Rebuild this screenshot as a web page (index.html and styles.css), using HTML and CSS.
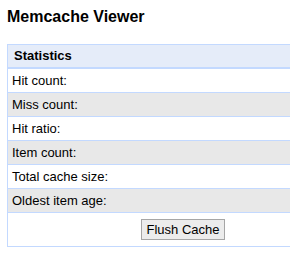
FILE: index.html
```html
<!DOCTYPE html>
<html>

<head>
    <meta charset="UTF-8">
    <meta name="viewport" content="width=device-width, initial-scale=1.0">
    <title>Memcache Viewer</title>
    <link rel="stylesheet" href="styles.css">
</head>

<body>

    <h2>Memcache Viewer</h2>

    <table class="stats">
        <tr class="head">
            <th>Statistics</th>
        </tr>
        <tr><td>Hit count:</td></tr>
        <tr class="alt"><td>Miss count:</td></tr>
        <tr><td>Hit ratio:</td></tr>
        <tr class="alt"><td>Item count:</td></tr>
        <tr><td>Total cache size:</td></tr>
        <tr class="alt"><td>Oldest item age:</td></tr>
        <tr class="actions">
            <td><button id="flush">Flush Cache</button></td>
        </tr>
    </table>

</body>
</html>
```

FILE: styles.css
```css
*{
    margin: 0px;
    padding: 0px;
    font-family: "Liberation Sans", Arial, sans-serif;
}
body{
    margin: 7px 0px 7px 7px;
    color: #000;
}
h2{
    font-size: 16px;
    line-height: 19px;
    margin-bottom: 18px;
}
.stats{
    width: 100%;
    border-collapse: collapse;
    font-size: 13px;
    border-left: 1px solid #c3d9ff;
}
.stats th{
    text-align: left;
    background-color: #e5ecf9;
    border-top: 1px solid #c3d9ff;
    border-bottom: 2px solid #c3d9ff;
    padding: 3px 6px 4px 6px;
    line-height: 15px;
}
.stats td{
    padding: 4px 4px;
    line-height: 15px;
    border-bottom: 1px solid #c3d9ff;
}
.stats .alt td{
    background-color: #e8e8e8;
}
.stats .actions td{
    text-align: center;
    padding: 6px 4px 6px 72px;
}
#flush{
    font-size: 13px;
    line-height: 15px;
    padding: 2px 5px;
    background-color: #ececec;
    border: 1px solid #a6a6a6;
    color: #000;
}
```
